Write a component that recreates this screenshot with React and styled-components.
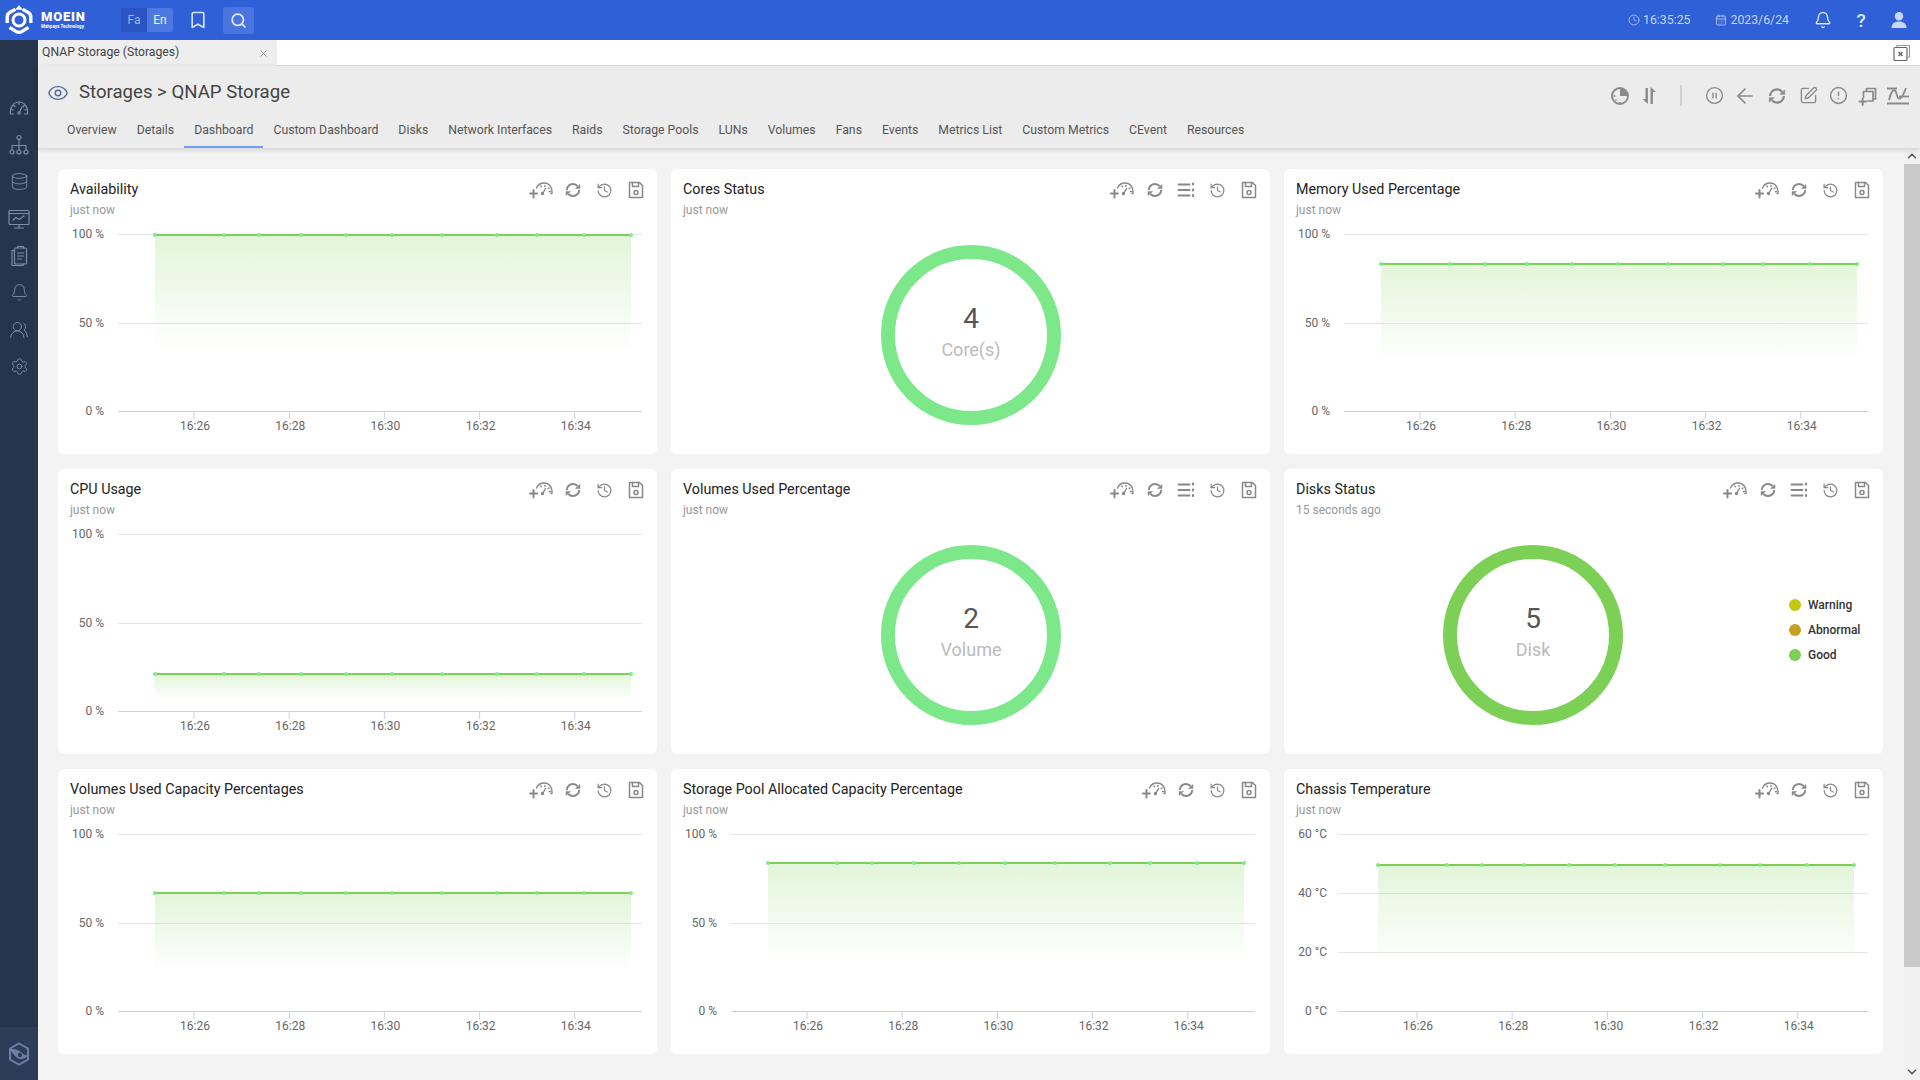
import React from 'react';
import styled, { createGlobalStyle } from 'styled-components';
import {
  ArrowLeft, Bell, Bookmark, CalendarDays, ChevronDown, ChevronUp, CircleAlert, CirclePause, Clock,
  Database, Eye, History, Search, Settings, SquarePen, UsersRound, X,
} from 'lucide-react';

const GlobalStyle = createGlobalStyle`
  html, body { margin: 0; padding: 0; height: 100%; overflow: hidden; }
  body { font-family: Roboto, "Liberation Sans", sans-serif; background: #f3f3f3; }
  * { box-sizing: border-box; }
`;

const TABS = ['Overview', 'Details', 'Dashboard', 'Custom Dashboard', 'Disks', 'Network Interfaces', 'Raids', 'Storage Pools', 'LUNs', 'Volumes', 'Fans', 'Events', 'Metrics List', 'Custom Metrics', 'CEvent', 'Resources'];
const DOTS = [97, 166, 201, 243, 288, 334, 384, 439, 479, 526, 573];
const PCT = [['100 %', 65], ['50 %', 154], ['0 %', 242]];
const TEMP = [['60 °C', 65], ['40 °C', 124], ['20 °C', 183], ['0 °C', 242]];

const CARDS = [
  { title: 'Availability', kind: 'line', lineY: 65 },
  { title: 'Cores Status', kind: 'ring', value: '4', unit: 'Core(s)', list: true },
  { title: 'Memory Used Percentage', kind: 'line', lineY: 94 },
  { title: 'CPU Usage', kind: 'line', lineY: 204 },
  { title: 'Volumes Used Percentage', kind: 'ring', value: '2', unit: 'Volume', list: true },
  { title: 'Disks Status', time: '15 seconds ago', kind: 'ring', value: '5', unit: 'Disk', list: true, legend: true },
  { title: 'Volumes Used Capacity Percentages', kind: 'line', lineY: 123 },
  { title: 'Storage Pool Allocated Capacity Percentage', kind: 'line', lineY: 93 },
  { title: 'Chassis Temperature', kind: 'line', lineY: 95, ticks: TEMP, shift: -3, left: 54, labelX: 43 },
];

/* ---------- drawn icons ---------- */

const Svg = ({ size = 20, w, children, sw = 1.6, color = 'currentColor' }) => (
  <svg width={w || size} height={size} viewBox={`0 0 ${w || size} ${size}`} fill="none" stroke={color} strokeWidth={sw} strokeLinecap="round" strokeLinejoin="round">
    {children}
  </svg>
);

const Logo = () => (
  <svg width="28" height="30" viewBox="0 0 28 30" fill="none" stroke="#fff">
    <path d="M10.500 4.200 5 7.200C3 8.300 2.200 10 2.200 12v6" strokeWidth="3.400" />
    <path d="M17.500 4.200 23 7.200c2 1.100 2.800 2.800 2.800 4.800v6" strokeWidth="3.400" />
    <path d="M4.500 22.500 11 26.400c2 1.100 4 1.100 6 0l6.500-3.900" strokeWidth="3.400" />
    <path d="M14 0.500 10.500 4.500h7z" fill="#fff" strokeWidth="0.500" />
    <circle cx="14" cy="15" r="6" strokeWidth="3" />
  </svg>
);

const UserIcon = () => (
  <svg width="18" height="18" viewBox="0 0 18 18" fill="#c8d6f8">
    <circle cx="9" cy="5.200" r="4.200" />
    <path d="M1.500 17c0-4.500 3-6.600 7.500-6.600s7.500 2.100 7.500 6.600z" />
  </svg>
);

const GaugeSide = () => (
  <Svg size={22} sw={1.200}>
    <path d="M2.500 17C1.500 10.500 5.500 5 11 5s9.500 5.500 8.500 12M2.500 17h3M16.500 17h3" />
    <path d="M11 5v2.500M5.500 8l1.500 1.500M16.500 8 15 9.500M3 12.500l2.200.5M19 12.500l-2.200.5M14 10l-2.500 5" />
    <circle cx="11" cy="16" r="1.200" />
  </Svg>
);

const NetworkSide = () => (
  <Svg size={22} sw={1.200}>
    <circle cx="11" cy="3.500" r="2" />
    <circle cx="4" cy="18" r="2" />
    <circle cx="11" cy="18" r="2" />
    <circle cx="18" cy="18" r="2" />
    <path d="M11 5.500V16M4 16v-4.500h14V16" />
  </Svg>
);

const MonitorSide = () => (
  <Svg size={22} sw={1.200}>
    <rect x="1" y="2.500" width="20" height="14" rx="1" />
    <path d="M1 5.500h20M11 16.500v3.500M6.500 20h9M5 12l3-2.500 3 2 5-3.500" />
  </Svg>
);

const ClipboardSide = () => (
  <Svg size={22} sw={1.200}>
    <rect x="6.500" y="3" width="12" height="16" rx="1" />
    <path d="M9.500 3V1.500h6V3M6.500 5.500H4v15h11v-1.500M9.500 8h6M9.500 11h6M9.500 14h4" />
  </Svg>
);

const ShieldEye = () => (
  <svg width="22" height="24" viewBox="0 0 22 24" fill="none" stroke="#6d80a3">
    <path d="M11 1.500 20 6.500v11L11 22.500 2 17.500v-11z" strokeWidth="2" />
    <path d="M2 7c4-.5 8 .5 11 3 2 1.800 4 3.500 7 3.500-2 3-6 4.500-9.500 3S5 12 2 7z" fill="#6d80a3" strokeWidth="0" />
    <circle cx="12" cy="13" r="2.200" fill="#2c3c59" strokeWidth="0" />
  </svg>
);

const GaugePlus = () => (
  <Svg size={20} w={24} sw={1.400}>
    <path d="M1 13.500h7M4.500 10v7.500" strokeWidth="2" />
    <path d="M7.500 8C9 4.500 12 3 15 3c5 0 8.500 4 8 10M22 13.500h1" />
    <path d="M12 6l.3.8M16 5.500v1M20 8l-.8.6M21.500 11.500l-1 .2M16.500 8.500 14 13" />
    <circle cx="13.500" cy="13.500" r="1" fill="currentColor" />
  </Svg>
);

const Refresh = ({ size = 18 }) => (
  <svg width={size} height={size} viewBox="0 0 18 18" fill="none" stroke="currentColor" strokeWidth="2">
    <path d="M2.800 9C2.800 5.600 5.600 3 9 3c2 0 3.500.8 4.600 2.200" />
    <path d="M15.200 9c0 3.400-2.800 6-6.200 6-2 0-3.500-.8-4.600-2.200" />
    <path d="M16 3.500v4h-4.500z" fill="currentColor" strokeWidth="0.500" />
    <path d="M2 14.500v-4h4.500z" fill="currentColor" strokeWidth="0.500" />
  </svg>
);

const ListMore = () => (
  <Svg size={18} sw={1.800}>
    <path d="M1.500 3.500h11M1.500 9h11M1.500 14.500h11" />
    <path d="M16 2.500v1M16 8.500v1M16 14v1" strokeWidth="2.200" />
  </Svg>
);

const Floppy = () => (
  <Svg size={18} sw={1.500}>
    <path d="M2.500 1.500h10l3 3v12h-13z" />
    <path d="M5.500 1.500v4h6v-4" />
    <circle cx="9" cy="11.500" r="2" />
  </Svg>
);

const TimePie = () => (
  <svg width="20" height="20" viewBox="0 0 20 20" fill="none" stroke="#8a8a8a" strokeWidth="2">
    <circle cx="10" cy="10" r="8" />
    <path d="M10 10V2.500A7.500 7.500 0 0 1 17.500 10z" fill="#8a8a8a" strokeWidth="0" />
    <path d="M3.500 10h2M10 16v1.500M5.500 14.500l1-1" strokeWidth="1.500" />
  </svg>
);

const SortArrows = () => (
  <svg width="18" height="20" viewBox="0 0 18 20" fill="#8a8a8a">
    <path d="M5.500 2h2.400v16l-5.400-5h3z" />
    <path d="M10.500 18h2.400V6h3l-5.400-5z" />
  </svg>
);

const CopyPlus = () => (
  <Svg size={20} sw={1.700} color="#8a8a8a">
    <path d="M8.500 4.500V2.500h9V13h-2" />
    <path d="M5.500 11V5.500h9.500v9.500H10" />
    <path d="M1.500 15.500h6.500M4.700 12.500v6.500" strokeWidth="2" />
  </Svg>
);

const ChartBox = () => (
  <svg width="24" height="20" viewBox="0 0 24 20" fill="none" stroke="#8a8a8a" strokeWidth="1.800">
    <path d="M1 2.500h10M1 17.500h22" />
    <path d="M3 14C5 6 7 3 9 4.500c2.500 2 1 7.500 4 8 3 .5 5-5.500 7-10.500" />
    <path d="M13 10.500h10" />
  </svg>
);

const WindowsClose = () => (
  <svg width="18" height="18" viewBox="0 0 18 18" fill="none" stroke="#666" strokeWidth="1.200">
    <path d="M4 3V1.500h12.500V13H15" stroke="#999" />
    <rect x="1" y="3.500" width="13" height="13" rx="1" />
    <path d="M5.500 8l4 4M9.500 8l-4 4" strokeWidth="1.500" />
  </svg>
);

/* ---------- layout ---------- */

const Page = styled.div`
  width: 100vw;
  height: 100vh;
  display: flex;
  flex-direction: column;
  overflow: hidden;
`;

const TopBar = styled.header`
  height: 40px;
  flex: none;
  background: #2f60d8;
  display: flex;
  align-items: center;
  padding: 0 2px 0 5px;
  color: #cddaf8;
`;

const Brand = styled.div`
  display: flex;
  align-items: center;
  gap: 8px;
  width: 116px;
`;

const BrandText = styled.div`
  color: #fff;
  display: flex;
  flex-direction: column;
  gap: 1px;
`;

const BrandName = styled.span`
  font-size: 13px;
  line-height: 12px;
  font-weight: 900;
  letter-spacing: 0.8px;
`;

const BrandSub = styled.span`
  font-size: 4.500px;
  line-height: 5px;
  font-weight: 700;
  white-space: nowrap;
`;

const Lang = styled.span`
  width: 26px;
  height: 24px;
  display: flex;
  align-items: center;
  justify-content: center;
  font-size: 12px;
  background: ${(p) => (p.active ? '#4d78e0' : '#2a55c2')};
  color: ${(p) => (p.active ? '#eef3ff' : '#9db6ee')};
  border-radius: ${(p) => (p.active ? '0 2px 2px 0' : '2px 0 0 2px')};
`;

const LangGroup = styled.div`
  display: flex;
`;

const BookmarkSlot = styled.div`
  width: 50px;
  display: flex;
  justify-content: center;
  color: #d5e0fa;
`;

const SearchButton = styled.div`
  width: 31px;
  height: 27px;
  background: #4a75df;
  border-radius: 3px;
  display: flex;
  align-items: center;
  justify-content: center;
  color: #e2eafc;
`;

const TopRight = styled.div`
  margin-left: auto;
  display: flex;
  align-items: center;
`;

const Stamp = styled.div`
  display: flex;
  align-items: center;
  gap: 3px;
  font-size: 12.300px;
  color: #c6d5f7;
  margin-right: ${(p) => p.gap}px;
  svg { color: #a5bcf0; }
`;

const TopIcon = styled.div`
  width: 38px;
  display: flex;
  justify-content: center;
  font-size: 19px;
  font-weight: 500;
  color: #dfe8fb;
`;

const Body = styled.div`
  flex: 1;
  display: flex;
  min-height: 0;
`;

const Sidebar = styled.aside`
  width: 38px;
  flex: none;
  background: #26344c;
  display: flex;
  flex-direction: column;
  align-items: center;
  padding-top: 49px;
  color: #7f8ca3;
`;

const SideItem = styled.div`
  height: 37px;
  display: flex;
  align-items: center;
  justify-content: center;
`;

const SideFoot = styled.div`
  margin-top: auto;
  height: 53px;
  width: 100%;
  background: #2c3c59;
  display: flex;
  align-items: center;
  justify-content: center;
`;

const Main = styled.main`
  flex: 1;
  min-width: 0;
  display: flex;
  flex-direction: column;
`;

const TabStrip = styled.div`
  height: 26px;
  flex: none;
  background: #fff;
  border-bottom: 1px solid #ddd;
  display: flex;
  justify-content: space-between;
  padding-right: 9px;
`;

const OpenTab = styled.div`
  width: 239px;
  height: 26px;
  background: #eee;
  padding: 0 8px 2px 4px;
  display: flex;
  align-items: center;
  justify-content: space-between;
  font-size: 12.200px;
  color: #444;
  svg { color: #777; margin-top: 3px; }
`;

const StripIcon = styled.div`
  display: flex;
  align-items: center;
`;

const PageHead = styled.div`
  height: 82px;
  flex: none;
  background: #ececec;
  box-shadow: 0 2px 5px rgba(0, 0, 0, 0.14);
  position: relative;
  z-index: 2;
  display: flex;
  flex-direction: column;
`;

const HeadRow = styled.div`
  height: 51px;
  display: flex;
  align-items: center;
  padding: 2px 7px 0 9px;
`;

const PageTitle = styled.h1`
  margin: 0 0 1px 10px;
  font-size: 18.600px;
  font-weight: 400;
  color: #444;
`;

const HeadTools = styled.div`
  margin-left: auto;
  display: flex;
  align-items: center;
  color: #8a8a8a;
  padding-top: 6px;
`;

const ToolSlot = styled.div`
  width: ${(p) => p.w || 30}px;
  display: flex;
  justify-content: center;
`;

const Divider = styled.div`
  width: 2px;
  height: 21px;
  background: #d0d0d0;
  margin: 0 17px 0 16px;
`;

const TabRow = styled.nav`
  display: flex;
  flex: 1;
  padding-left: 19px;
  align-items: stretch;
`;

const Tab = styled.a`
  padding: 0 10px 3px;
  font-size: 12.250px;
  color: #555;
  display: flex;
  align-items: center;
  border-bottom: 2px solid ${(p) => (p.active ? '#6ea0f8' : 'transparent')};
`;

const Content = styled.div`
  flex: 1;
  min-height: 0;
  display: flex;
  background: #f3f3f3;
`;

const Grid = styled.div`
  flex: 1;
  min-width: 0;
  padding: 21px 21px 0 20px;
  display: grid;
  grid-template-columns: repeat(3, 1fr);
  grid-auto-rows: 285px;
  column-gap: 14px;
  row-gap: 15px;
`;

const ScrollBar = styled.div`
  width: 16px;
  flex: none;
  background: #f1f1f1;
  display: flex;
  flex-direction: column;
  align-items: center;
  color: #555;
`;

const ScrollArrow = styled.div`
  height: 16px;
  display: flex;
  align-items: center;
  justify-content: center;
  margin-top: ${(p) => (p.bottom ? 'auto' : '0')};
`;

const ScrollThumb = styled.div`
  width: 100%;
  height: 803px;
  background: #c9c9c9;
`;

const Card = styled.section`
  background: #fff;
  border-radius: 6px;
  display: flex;
  flex-direction: column;
  overflow: hidden;
`;

const CardHead = styled.div`
  height: 50px;
  flex: none;
  display: flex;
  justify-content: space-between;
  padding: 10px 5px 0 12px;
`;

const CardTitle = styled.h3`
  margin: 0 0 1px;
  font-size: 14.300px;
  line-height: 20px;
  font-weight: 400;
  color: #222;
`;

const CardTime = styled.div`
  font-size: 12px;
  line-height: 20px;
  color: #999;
`;

const CardTools = styled.div`
  display: flex;
  align-items: flex-start;
  color: #888;
  padding-top: 1px;
`;

const CardTool = styled.div`
  width: ${(p) => p.w || 31.5}px;
  height: 20px;
  display: flex;
  justify-content: center;
  align-items: center;
`;

const ChartSvg = styled.svg`
  display: block;
  width: 100%;
  height: 235px;
  font-family: Roboto, "Liberation Sans", sans-serif;
  font-size: 12px;
`;

const RingBody = styled.div`
  flex: 1;
  position: relative;
  display: flex;
  align-items: center;
  justify-content: ${(p) => (p.legend ? 'flex-start' : 'center')};
  padding-left: ${(p) => (p.legend ? '158px' : '0')};
  padding-bottom: 3px;
`;

const Ring = styled.div`
  width: 180px;
  height: 180px;
  border-radius: 50%;
  border: 14px solid ${(p) => p.color};
  display: flex;
  flex-direction: column;
  align-items: center;
  justify-content: center;
  padding-bottom: 6px;
  margin-left: 1px;
`;

const RingValue = styled.div`
  font-size: 28px;
  line-height: 36px;
  color: #555;
`;

const RingUnit = styled.div`
  font-size: 18px;
  line-height: 26px;
  color: #bbb;
`;

const Legend = styled.ul`
  position: absolute;
  top: 78px;
  left: 505px;
  margin: 0;
  padding: 0;
  list-style: none;
  display: flex;
  flex-direction: column;
  gap: 9px;
`;

const LegendItem = styled.li`
  display: flex;
  align-items: center;
  gap: 7px;
  font-size: 12px;
  line-height: 16px;
  font-weight: 500;
  color: #333;
`;

const LegendDot = styled.span`
  width: 12px;
  height: 12px;
  border-radius: 50%;
  background: ${(p) => p.color};
`;

/* ---------- parts ---------- */

const LineChart = ({ id, lineY, ticks = PCT, shift = 0, left = 60, labelX = 46 }) => {
  const base = ticks[ticks.length - 1][1];
  const x0 = DOTS[0] + shift;
  const x1 = DOTS[DOTS.length - 1] + shift;
  const fade = lineY + (base - lineY) * (2 / 3);
  return (
    <ChartSvg viewBox="0 50 599 235">
      <defs>
        <linearGradient id={id} x1="0" y1="0" x2="0" y2="1">
          <stop offset="0" stopColor="#7bd055" stopOpacity="0.22" />
          <stop offset="1" stopColor="#7bd055" stopOpacity="0" />
        </linearGradient>
      </defs>
      {ticks.map(([label, y], i) => (
        <g key={label}>
          <text x={labelX} y={y + 4} textAnchor="end" fill="#666">{label}</text>
          <line x1={left} x2="584" y1={y + 0.5} y2={y + 0.5} stroke={i === ticks.length - 1 ? '#c8d2e4' : '#e6e6e6'} />
        </g>
      ))}
      <rect x={x0} y={lineY + 1} width={x1 - x0} height={fade - lineY} fill={`url(#${id})`} />
      <line x1={x0} x2={x1} y1={lineY + 1} y2={lineY + 1} stroke="#7bd055" strokeWidth="2" />
      {DOTS.map((x) => <circle key={x} cx={x + shift} cy={lineY + 1} r="2" fill="#7dea8b" />)}
      {['16:26', '16:28', '16:30', '16:32', '16:34'].map((t, i) => {
        const x = 136 + shift + i * 95.2;
        return (
          <g key={t}>
            <line x1={x} x2={x} y1={base} y2={base + 8} stroke="#c8d2e4" />
            <text x={x + 1} y={base + 19} textAnchor="middle" fill="#666">{t}</text>
          </g>
        );
      })}
    </ChartSvg>
  );
};

const DashCard = ({ card, index }) => (
  <Card>
    <CardHead>
      <div>
        <CardTitle>{card.title}</CardTitle>
        <CardTime>{card.time || 'just now'}</CardTime>
      </div>
      <CardTools>
        <CardTool w={33.5}><GaugePlus /></CardTool>
        <CardTool><Refresh /></CardTool>
        {card.list && <CardTool><ListMore /></CardTool>}
        <CardTool><History size={17} strokeWidth={1.700} /></CardTool>
        <CardTool><Floppy /></CardTool>
      </CardTools>
    </CardHead>
    {card.kind === 'line' ? (
      <LineChart id={`fill${index}`} lineY={card.lineY} ticks={card.ticks} shift={card.shift} left={card.left} labelX={card.labelX} />
    ) : (
      <RingBody legend={card.legend}>
        <Ring color={card.legend ? '#7bd055' : '#7ce88a'}>
          <RingValue>{card.value}</RingValue>
          <RingUnit>{card.unit}</RingUnit>
        </Ring>
        {card.legend && (
          <Legend>
            <LegendItem><LegendDot color="#c5c70f" />Warning</LegendItem>
            <LegendItem><LegendDot color="#c6a023" />Abnormal</LegendItem>
            <LegendItem><LegendDot color="#7bd055" />Good</LegendItem>
          </Legend>
        )}
      </RingBody>
    )}
  </Card>
);

const App = () => (
  <Page>
    <GlobalStyle />
    <TopBar>
      <Brand>
        <Logo />
        <BrandText>
          <BrandName>MOEIN</BrandName>
          <BrandSub>Mahpaya Technology</BrandSub>
        </BrandText>
      </Brand>
      <LangGroup>
        <Lang>Fa</Lang>
        <Lang active>En</Lang>
      </LangGroup>
      <BookmarkSlot><Bookmark size={20} strokeWidth={2} /></BookmarkSlot>
      <SearchButton><Search size={17} strokeWidth={2.400} /></SearchButton>
      <TopRight>
        <Stamp gap={25}><Clock size={12} />16:35:25</Stamp>
        <Stamp gap={15}><CalendarDays size={12} />2023/6/24</Stamp>
        <TopIcon><Bell size={18} strokeWidth={1.800} /></TopIcon>
        <TopIcon>?</TopIcon>
        <TopIcon><UserIcon /></TopIcon>
      </TopRight>
    </TopBar>
    <Body>
      <Sidebar>
        <SideItem><GaugeSide /></SideItem>
        <SideItem><NetworkSide /></SideItem>
        <SideItem><Database size={19} strokeWidth={1.200} /></SideItem>
        <SideItem><MonitorSide /></SideItem>
        <SideItem><ClipboardSide /></SideItem>
        <SideItem><Bell size={19} strokeWidth={1.200} /></SideItem>
        <SideItem><UsersRound size={20} strokeWidth={1.200} /></SideItem>
        <SideItem><Settings size={19} strokeWidth={1.200} /></SideItem>
        <SideFoot><ShieldEye /></SideFoot>
      </Sidebar>
      <Main>
        <TabStrip>
          <OpenTab>QNAP Storage (Storages)<X size={11} strokeWidth={1.600} /></OpenTab>
          <StripIcon><WindowsClose /></StripIcon>
        </TabStrip>
        <PageHead>
          <HeadRow>
            <Eye size={22} strokeWidth={1.500} color="#4c6c98" />
            <PageTitle>Storages &gt; QNAP Storage</PageTitle>
            <HeadTools>
              <ToolSlot w={28}><TimePie /></ToolSlot>
              <ToolSlot><SortArrows /></ToolSlot>
              <Divider />
              <ToolSlot><CirclePause size={19} strokeWidth={1.700} /></ToolSlot>
              <ToolSlot w={32}><ArrowLeft size={24} strokeWidth={1.700} /></ToolSlot>
              <ToolSlot w={32}><Refresh size={20} /></ToolSlot>
              <ToolSlot><SquarePen size={19} strokeWidth={1.700} /></ToolSlot>
              <ToolSlot><CircleAlert size={19} strokeWidth={1.800} /></ToolSlot>
              <ToolSlot><CopyPlus /></ToolSlot>
              <ToolSlot><ChartBox /></ToolSlot>
            </HeadTools>
          </HeadRow>
          <TabRow>
            {TABS.map((t) => <Tab key={t} active={t === 'Dashboard'}>{t}</Tab>)}
          </TabRow>
        </PageHead>
        <Content>
          <Grid>
            {CARDS.map((c, i) => <DashCard key={c.title} card={c} index={i} />)}
          </Grid>
          <ScrollBar>
            <ScrollArrow><ChevronUp size={14} strokeWidth={2.500} /></ScrollArrow>
            <ScrollThumb />
            <ScrollArrow bottom><ChevronDown size={14} strokeWidth={2.500} /></ScrollArrow>
          </ScrollBar>
        </Content>
      </Main>
    </Body>
  </Page>
);

export default App;
